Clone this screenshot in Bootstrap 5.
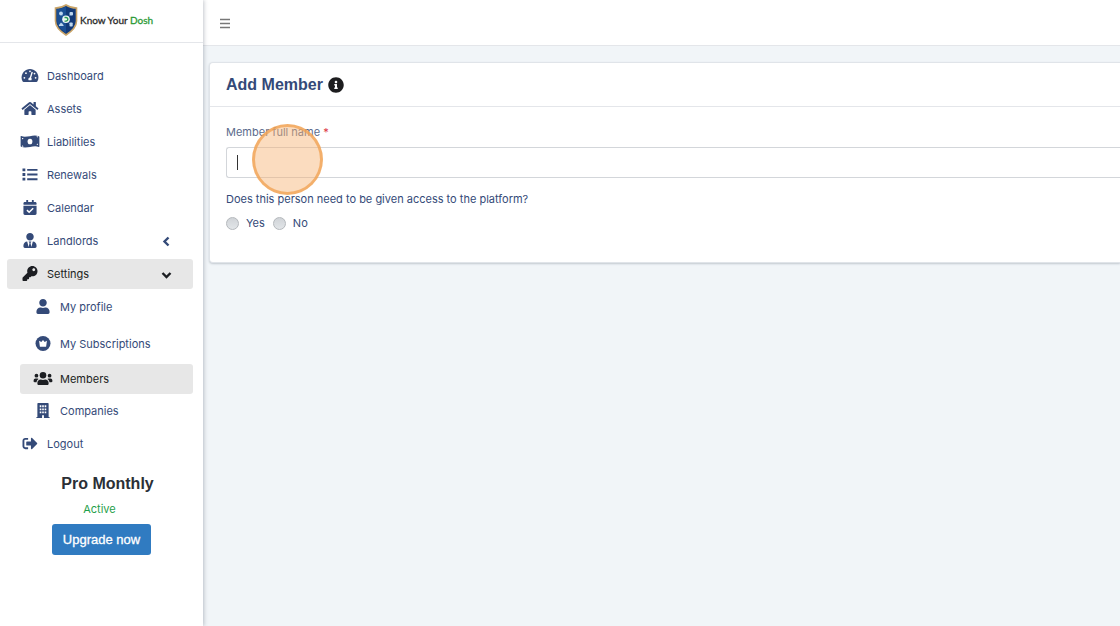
<!DOCTYPE html>
<html lang="en">
<head>
<meta charset="utf-8">
<meta name="viewport" content="width=device-width, initial-scale=1">
<title>Add Member - Know Your Dosh</title>
<link href="https://cdn.jsdelivr.net/npm/bootstrap@5.3.0/dist/css/bootstrap.min.css" rel="stylesheet">
<style>
  :root { --navy: #344a78; --line: #e4e6ea; --heading: "Liberation Sans", Arial, sans-serif; }
  body { font: 11px/18px Inter, "Liberation Sans", sans-serif; color: var(--navy); background: #f1f5f8; }
  .side { width: 203px; box-shadow: 1px 0 4px rgba(60, 70, 90, .3); z-index: 1; }
  .brand { height: 43px; border-bottom: 1px solid var(--line); padding: 0 0 2px 54px; font: 400 10px/14px Lato, sans-serif; color: #2b2b2b; -webkit-text-stroke: .3px currentColor; gap: 2px; }
  .brand svg { -webkit-text-stroke: 0; }
  .brand em { font-style: normal; color: #2b9a35; }
  .menu { padding: 18px 10px 0 7px; gap: 3px; }
  .submenu { padding-left: 13px; gap: 2px; }
  .item { height: 30px; padding: 0 21px 0 13px; gap: 7px; border-radius: 3px; color: var(--navy); text-decoration: none; }
  .item.current { background: #e7e7e7; color: #1c1e22; }
  .item.tall { height: 38px; padding-top: 2px; }
  .ico { width: 20px; height: 15px; flex: none; fill: currentColor; margin-bottom: 2px; }
  .chev { width: 11px; height: 11px; fill: none; stroke: currentColor; stroke-width: 2.4; }
  .plan { padding: 15px 0 0; }
  .plan h2 { font: 700 16px/20px var(--heading); color: #2b2f36; margin: 0 0 6px; padding-left: 12px; }
  .plan p { color: #1fa04b; margin: 0 0 6px; padding-right: 4px; }
  .upgrade { background: #307bc1; color: #fff; font: 13px/19px var(--heading); padding: 5px 10px; border-radius: 3px; -webkit-text-stroke: .3px #fff; }
  .topbar { height: 46px; border-bottom: 1px solid var(--line); padding-left: 14px; }
  .burger { width: 16px; height: 16px; stroke: #777; stroke-width: 1.5; }
  .panel { margin: 16px 0 0 6px; border: 1px solid #e0e4e9; border-right: 0; border-radius: 4px 0 0 4px; box-shadow: 0 1px 2px rgba(60, 70, 90, .25); }
  .panel header { height: 44px; padding: 0 16px; gap: 5px; border-bottom: 1px solid var(--line); }
  .panel h1 { font: 700 16px/20px var(--heading); margin: 0; }
  .panel form { padding: 16px 0 30px 16px; }
  .panel .field-name { color: #5b6b8c; margin-bottom: 6px; }
  .panel .form-control { height: 31px; border-color: #d3d6da; border-right: 0; border-radius: 3px 0 0 3px; font-size: 11px; }
  .caret { left: 11px; top: 8px; width: 1px; height: 15px; background: #333; }
  .click-spot { left: 26px; top: -23px; width: 71px; height: 71px; border: 3px solid rgba(240, 160, 80, .75); border-radius: 50%; background: rgba(246, 178, 112, .45); pointer-events: none; z-index: 5; }
  .access { padding-top: 12px; }
  .access legend { font-size: 11px; line-height: 18px; }
  .answers { gap: 8px; padding-top: 6px; }
  .answers label { gap: 7px; }
  .choice { appearance: none; width: 13px; height: 13px; margin: 3px 0 0; border: 1px solid #b4b8bc; border-radius: 50%; background: linear-gradient(#d0d4d8, #e2e5e8); }
  .choice:checked { background: #307bc1; }
</style>
<script src="https://cdn.jsdelivr.net/npm/bootstrap@5.3.0/dist/js/bootstrap.bundle.min.js"></script>
</head>
<body>
<div class="d-flex min-vh-100">
  <aside class="side bg-white flex-shrink-0 position-relative">
    <div class="brand d-flex align-items-center">
      <svg width="24" height="32" viewBox="0 0 24 32" aria-hidden="true">
        <path d="M12 1C9 3 5 4 1.500 4v13c0 6 5 10.500 10.500 14 5.500-3.500 10.500-8 10.500-14V4C19 4 15 3 12 1z" fill="#123a78" stroke="#c9a468" stroke-width="1.600"/>
        <path d="M12 2.500C9.500 4 6 5 3 5v11.500C3 22 7 25.500 12 29z" fill="#1b4f92"/>
        <path d="M7 10l10 11M17 10L7 21" stroke="#3f73ad" stroke-width=".8"/>
        <g fill="#bcd6ee"><circle cx="7" cy="9.500" r="1.900"/><rect x="15.500" y="8" width="3.500" height="3.500" rx="1"/><path d="M5 21l2-2.500L9.500 21v1H5z"/><rect x="15.500" y="18.500" width="3.200" height="4" rx=".8"/></g>
        <circle cx="12" cy="15.300" r="3.800" fill="#edf7f4"/><path d="M10.500 13.500h1.500a1.800 1.800 0 010 3.600h-1.500" fill="none" stroke="#2b9a55" stroke-width="1.400"/>
      </svg>
      <span>Know Your <em>Dosh</em></span>
    </div>
    <nav class="menu d-flex flex-column" aria-label="Main">
      <a class="item d-flex align-items-center" href="#"><svg class="ico" viewBox="0 0 576 512"><path d="M288 32C129 32 0 161 0 320c0 53 14 102 39 145 6 9 16 15 28 15h442c12 0 22-6 28-15 25-43 39-92 39-145C576 161 447 32 288 32z"/><g fill="#fff"><circle cx="288" cy="112" r="30"/><circle cx="150" cy="178" r="30"/><circle cx="96" cy="336" r="30"/><circle cx="480" cy="336" r="30"/><circle cx="442" cy="190" r="30"/><path d="M342 132l44 14-60 188c25 24 24 60 10 82h-96c-26-46 2-94 42-96z"/></g></svg>Dashboard</a>
      <a class="item d-flex align-items-center" href="#"><svg class="ico" viewBox="0 0 576 512"><path d="M280.370 148.260L96 300.110V464a16 16 0 0 0 16 16l112.060-.290a16 16 0 0 0 15.920-16V368a16 16 0 0 1 16-16h64a16 16 0 0 1 16 16v95.640a16 16 0 0 0 16 16.050L464 480a16 16 0 0 0 16-16V300L295.670 148.260a12.190 12.190 0 0 0-15.300 0zM571.600 251.470L488 182.560V44.050a12 12 0 0 0-12-12h-56a12 12 0 0 0-12 12v72.610L318.470 43a48 48 0 0 0-61 0L4.340 251.470a12 12 0 0 0-1.600 16.900l25.500 31A12 12 0 0 0 45.150 301l235.220-193.740a12.190 12.190 0 0 1 15.300 0L530.900 301a12 12 0 0 0 16.900-1.600l25.500-31a12 12 0 0 0-1.700-16.930z"/></svg>Assets</a>
      <a class="item d-flex align-items-center" href="#"><svg class="ico" viewBox="0 0 640 512"><path d="M622 76c-200-85-402 72-604-4-9-3-18 4-18 14v322c0 12 7 23 18 28 201 85 402-72 604 4 9 3 18-4 18-14V104c0-12-7-23-18-28z"/><g fill="#fff"><ellipse cx="320" cy="256" rx="82" ry="98"/><path d="M48 136c20 5 34 6 50 5-4 24-26 40-50 40zM48 390c26 1 46 18 48 42-17 0-33-2-48-7zM592 376c-16-4-34-5-50-5 4-24 26-40 50-40zM592 122c-26-1-46-18-48-42 17 0 33 2 48 7z"/></g></svg>Liabilities</a>
      <a class="item d-flex align-items-center" href="#"><svg class="ico" viewBox="0 0 512 512"><path d="M0 48h96v96H0zM0 208h96v96H0zM0 368h96v96H0zM160 64h352v64H160zM160 224h352v64H160zM160 384h352v64H160z"/></svg>Renewals</a>
      <a class="item d-flex align-items-center" href="#"><svg class="ico" viewBox="0 0 448 512"><path d="M436 160H12c-6.627 0-12-5.373-12-12v-36c0-26.510 21.490-48 48-48h48V12c0-6.627 5.373-12 12-12h40c6.627 0 12 5.373 12 12v52h128V12c0-6.627 5.373-12 12-12h40c6.627 0 12 5.373 12 12v52h48c26.510 0 48 21.490 48 48v36c0 6.627-5.373 12-12 12zM12 192h424c6.627 0 12 5.373 12 12v260c0 26.510-21.490 48-48 48H48c-26.510 0-48-21.490-48-48V204c0-6.627 5.373-12 12-12z"/><path d="M120 345l75 72 138-136" fill="none" stroke="#fff" stroke-width="54"/></svg>Calendar</a>
      <a class="item d-flex align-items-center" href="#"><svg class="ico" viewBox="0 0 448 512"><path d="M224 256c70.700 0 128-57.300 128-128S294.700 0 224 0 96 57.300 96 128s57.300 128 128 128zm95.800 32.600L272 480l-32-136 32-56h-96l32 56-32 136-47.800-191.400C56.900 292 0 350.300 0 422.400V464c0 26.500 21.500 48 48 48h352c26.500 0 48-21.500 48-48v-41.600c0-72.100-56.900-130.400-128.200-133.800z"/></svg>Landlords<svg class="chev ms-auto" viewBox="0 0 11 11"><path d="M7.500 1.500l-4 4 4 4"/></svg></a>
      <a class="item current d-flex align-items-center" href="#" aria-expanded="true"><svg class="ico" viewBox="0 0 512 512"><path d="M512 176.001C512 273.203 433.202 352 336 352c-11.220 0-22.190-1.062-32.827-3.069l-24.012 27.014A23.999 23.999 0 0 1 261.223 384H224v40c0 13.255-10.745 24-24 24h-40v40c0 13.255-10.745 24-24 24H24c-13.255 0-24-10.745-24-24v-78.059c0-6.365 2.529-12.470 7.029-16.971l161.802-161.802C163.108 213.814 160 195.271 160 176 160 78.798 238.797.001 335.999 0 433.488-.001 512 78.511 512 176.001zM336 128c0 26.510 21.490 48 48 48s48-21.490 48-48-21.490-48-48-48-48 21.490-48 48z"/></svg>Settings<svg class="chev ms-auto" viewBox="0 0 11 11"><path d="M1.500 4l4 4 4-4"/></svg></a>
      <div class="submenu d-flex flex-column">
        <a class="item d-flex align-items-center" href="#"><svg class="ico" viewBox="0 0 448 512"><path d="M224 256c70.700 0 128-57.300 128-128S294.700 0 224 0 96 57.300 96 128s57.300 128 128 128zm89.600 32h-16.700c-22.200 10.200-46.900 16-72.900 16s-50.600-5.800-72.900-16h-16.700C60.200 288 0 348.200 0 422.400V464c0 26.500 21.500 48 48 48h352c26.500 0 48-21.500 48-48v-41.600c0-74.200-60.200-134.400-134.400-134.400z"/></svg>My profile</a>
        <a class="item tall d-flex align-items-center" href="#"><svg class="ico" viewBox="0 0 16 16"><circle cx="8" cy="8" r="8"/><path fill="#fff" d="M3.800 5l2.400 1.500L8 4.300l1.800 2.200L12.200 5l-.9 6.500H4.700z"/></svg>My Subscriptions</a>
        <a class="item current d-flex align-items-center" href="#" aria-current="page"><svg class="ico" viewBox="0 0 640 512"><circle cx="96" cy="160" r="64"/><circle cx="544" cy="160" r="64"/><circle cx="320" cy="144" r="112"/><path d="M64 256h64c18 0 34 7 45 19-40 22-68 61-74 109H32c-18 0-32-14-32-32v-32c0-35 29-64 64-64zM576 256h-64c-18 0-34 7-45 19 40 22 68 61 74 109h67c18 0 32-14 32-32v-32c0-35-29-64-64-64zM243 288c49 22 105 22 154 0 64 0 115 52 115 115v29c0 27-21 48-48 48H176c-27 0-48-21-48-48v-29c0-63 51-115 115-115z"/></svg>Members</a>
        <a class="item d-flex align-items-center" href="#"><svg class="ico" viewBox="0 0 448 512"><path fill-rule="evenodd" d="M32 24Q32 0 56 0h336q24 0 24 24v456h32v32H256v-96h-64v96H0v-32h32zM112 80v64h56v-64zM196 80v64h56v-64zM280 80v64h56v-64zM112 184v64h56v-64zM196 184v64h56v-64zM280 184v64h56v-64zM112 288v64h56v-64zM196 288v64h56v-64zM280 288v64h56v-64z"/></svg>Companies</a>
      </div>
      <a class="item d-flex align-items-center" href="#"><svg class="ico" viewBox="0 0 512 512"><path d="M497 273L329 441c-15 15-41 4.500-41-17v-96H152c-13.300 0-24-10.700-24-24v-96c0-13.300 10.700-24 24-24h136V88c0-21.400 25.900-32 41-17l168 168c9.300 9.400 9.300 24.600 0 34zM192 436v-40c0-6.600-5.400-12-12-12H96c-17.700 0-32-14.300-32-32V160c0-17.700 14.300-32 32-32h84c6.600 0 12-5.400 12-12V76c0-6.600-5.400-12-12-12H96c-53 0-96 43-96 96v192c0 53 43 96 96 96h84c6.600 0 12-5.400 12-12z"/></svg>Logout</a>
    </nav>
    <section class="plan text-center">
      <h2>Pro Monthly</h2>
      <p>Active</p>
      <button type="button" class="btn upgrade">Upgrade now</button>
    </section>
  </aside>
  <main class="flex-grow-1">
    <div class="topbar bg-white d-flex align-items-center">
      <button type="button" class="btn p-0 border-0 d-flex" aria-label="Toggle menu"><svg class="burger" viewBox="0 0 16 16"><path d="M3 4.500h10M3 8.500h10M3 12.500h10"/></svg></button>
    </div>
    <section class="panel bg-white">
      <header class="d-flex align-items-center">
        <h1>Add Member</h1>
        <svg width="16" height="16" viewBox="0 0 512 512" fill="#1d1d1f" role="img" aria-label="Info"><path d="M256 8C119.043 8 8 119.083 8 256c0 136.997 111.043 248 248 248s248-111.003 248-248C504 119.083 392.957 8 256 8zm0 110c23.196 0 42 18.804 42 42s-18.804 42-42 42-42-18.804-42-42 18.804-42 42-42zm56 254c0 6.627-5.373 12-12 12h-88c-6.627 0-12-5.373-12-12v-24c0-6.627 5.373-12 12-12h12v-64h-12c-6.627 0-12-5.373-12-12v-24c0-6.627 5.373-12 12-12h64c6.627 0 12 5.373 12 12v100h12c6.627 0 12 5.373 12 12v24z"/></svg>
      </header>
      <form>
        <label class="field-name d-block" for="fullName">Member full name <span class="text-danger">*</span></label>
        <div class="position-relative">
          <input class="form-control" id="fullName" type="text" required>
          <span class="caret position-absolute"></span>
          <span class="click-spot position-absolute"></span>
        </div>
        <fieldset class="access">
          <legend class="m-0">Does this person need to be given access to the platform?</legend>
          <div class="answers d-flex">
            <label class="d-flex" for="accessYes"><input class="choice" type="radio" name="access" id="accessYes">Yes</label>
            <label class="d-flex" for="accessNo"><input class="choice" type="radio" name="access" id="accessNo">No</label>
          </div>
        </fieldset>
      </form>
    </section>
  </main>
</div>
</body>
</html>
